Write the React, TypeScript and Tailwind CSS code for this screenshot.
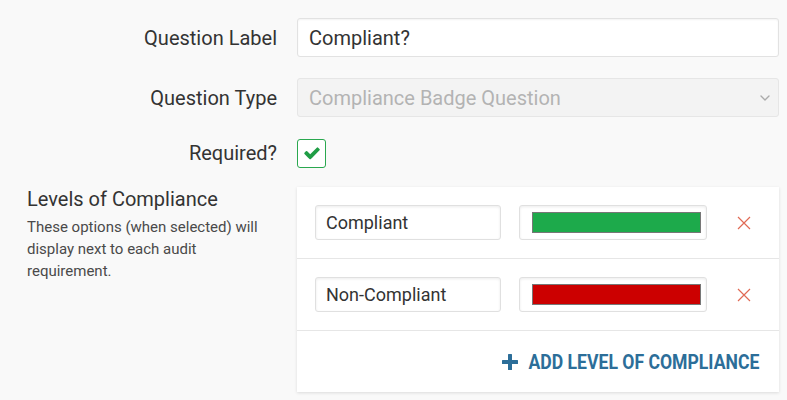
import { ChevronDown } from "lucide-react";

function CheckIcon() {
  return (
    <svg viewBox="0 0 1792 1792" className="h-[18px] w-[18px]" fill="#1f9d45">
      <path d="M1671 566q0 40-28 68l-724 724-136 136q-28 28-68 28t-68-28l-136-136-362-362q-28-28-28-68t28-68l136-136q28-28 68-28t68 28l294 295 656-657q28-28 68-28t68 28l136 136q28 28 28 68z" />
    </svg>
  );
}

function XIcon() {
  return (
    <svg viewBox="0 0 14 14" className="h-[14px] w-[14px]" stroke="#e06a55" strokeWidth="1.2" fill="none">
      <path d="M1 1L13 13M13 1L1 13" />
    </svg>
  );
}

function PlusIcon() {
  return (
    <svg viewBox="0 0 16 16" className="h-[16px] w-[16px]" fill="#2c6e99">
      <rect x="6" y="0" width="4" height="16" rx="0.5" />
      <rect x="0" y="6" width="16" height="4" rx="0.5" />
    </svg>
  );
}

const levels = [
  { name: "Compliant", color: "#1daa4b" },
  { name: "Non-Compliant", color: "#cc0000" },
];

export default function App() {
  return (
    <div className="min-h-[400px] bg-[#f9f9f9] pt-[18px] pr-[8px] font-['Roboto',sans-serif] text-[#333]">
      <div className="flex items-center gap-[20px]">
        <label className="w-[277px] text-right text-[20px]">Question Label</label>
        <input
          className="h-[39px] flex-1 rounded-[3px] border border-[#e2e2e2] bg-white px-[11px] text-[20px] text-[#333] shadow-[inset_0_1px_2px_rgba(0,0,0,0.05)] outline-none"
          defaultValue="Compliant?"
        />
      </div>

      <div className="mt-[21px] flex items-center gap-[20px]">
        <label className="w-[277px] text-right text-[20px]">Question Type</label>
        <div className="flex h-[39px] flex-1 items-center justify-between rounded-[3px] border border-[#e6e6e6] bg-[#f3f3f3] pl-[11px] pr-[5px] text-[20px] text-[#b3b3b3]">
          <span>Compliance Badge Question</span>
          <ChevronDown className="h-[16px] w-[16px] text-[#aaa]" strokeWidth={2} />
        </div>
      </div>

      <div className="mt-[21px] flex items-center gap-[20px]">
        <label className="w-[277px] text-right text-[20px]">Required?</label>
        <div className="flex h-[29px] w-[29px] items-center justify-center rounded-[3px] border-[1.5px] border-[#2aa84f] bg-white">
          <CheckIcon />
        </div>
      </div>

      <div className="mt-[19px] flex items-start gap-[20px]">
        <div className="w-[277px] pl-[27px]">
          <h3 className="mt-[1px] text-[20px] leading-[22px] text-[#333]">Levels of Compliance</h3>
          <p className="mt-[6px] w-[245px] text-[15px] leading-[22px] text-[#4a4a4a]">
            These options (when selected) will display next to each audit requirement.
          </p>
        </div>
        <div className="flex-1 bg-white shadow-[0_1px_3px_rgba(0,0,0,0.12)]">
          {levels.map((l) => (
            <div key={l.name} className="flex items-center border-b border-[#e6e6e6] pt-[18px] pb-[18px] pl-[18px]">
              <input
                className="h-[35px] w-[186px] rounded-[3px] border border-[#e0e0e0] bg-white px-[10px] text-[18px] text-[#333] shadow-[inset_0_1px_3px_rgba(0,0,0,0.08)] outline-none"
                defaultValue={l.name}
              />
              <div className="ml-[18px] flex h-[35px] w-[188px] items-center rounded-[3px] border border-[#e0e0e0] bg-white pl-[12px] pr-[5px] shadow-[inset_0_1px_3px_rgba(0,0,0,0.08)]">
                <div className="h-[21px] flex-1 border border-[#777]" style={{ backgroundColor: l.color }} />
              </div>
              <button className="ml-[30px] flex items-center">
                <XIcon />
              </button>
            </div>
          ))}
          <div className="flex h-[61px] items-center justify-end pr-[20px]">
            <PlusIcon />
            <span className="ml-[-21px] origin-right scale-x-[0.88] whitespace-nowrap text-[20px] font-bold text-[#2c6e99]">
              ADD LEVEL OF COMPLIANCE
            </span>
          </div>
        </div>
      </div>
    </div>
  );
}
